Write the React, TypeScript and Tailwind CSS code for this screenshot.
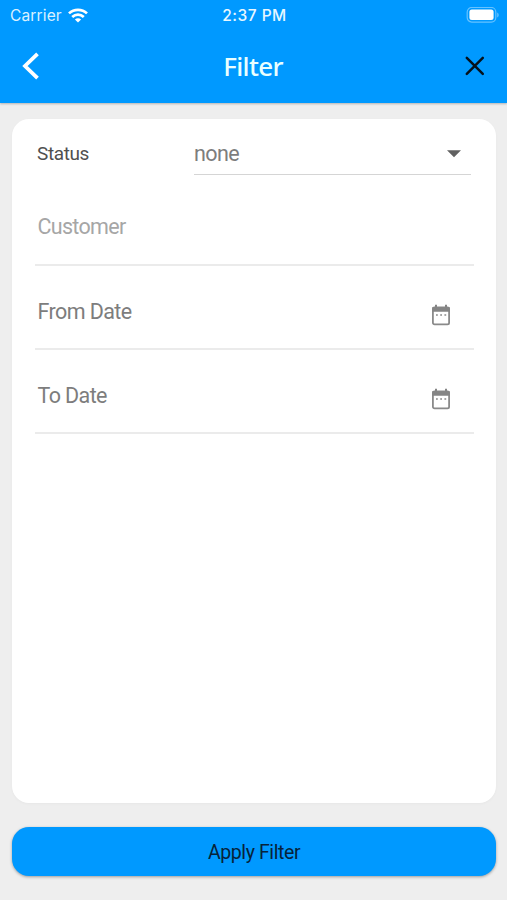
import { useState } from "react";

function StatusBar() {
  return (
    <div className="grid h-[30px] grid-cols-3 items-center pl-[10px] pr-2 font-['Inter','Liberation_Sans',sans-serif] text-white">
      <div className="flex items-center gap-[6px]">
        <span className="pt-px text-[15.5px] leading-5 tracking-[0.15px] text-[#d9f1ff]">Carrier</span>
        <svg width="20" height="15" viewBox="0 0 20 15" fill="none" stroke="currentColor" strokeWidth="2.7">
          <path d="M1 5.4C6 .6 14 .6 19 5.4" />
          <path d="M4.2 9C7.6 5.8 12.4 5.8 15.8 9" />
          <path d="M10 14.6 6.9 11.6c1.8-1.7 4.4-1.7 6.2 0z" fill="currentColor" stroke="none" />
        </svg>
      </div>
      <span className="pt-px text-center text-[15.5px] font-medium leading-5 tracking-[0.5px] text-[#e8f7ff]">2:37 PM</span>
      <svg className="justify-self-end" width="33" height="16" viewBox="0 0 33 16">
        <rect x="1.2" y=".5" width="28.6" height="14.6" rx="4.5" fill="none" stroke="#66c2ff" strokeWidth="1.2" />
        <rect x="3.4" y="2.6" width="24.2" height="10.4" rx="2.5" fill="#fff" />
        <path d="M31.2 5.5c2 .8 2 4.2 0 5z" fill="#66c2ff" />
      </svg>
    </div>
  );
}

function CalendarIcon() {
  return (
    <svg width="20" height="22" viewBox="0 0 20 22" fill="none">
      <rect x="1.9" y="3.4" width="16.2" height="17" rx="1.6" stroke="#8a8a8a" strokeWidth="1.8" />
      <path d="M1.2 3.2h17.6v4.6H1.2zM4 .8h2v3H4zM14 .8h2v3h-2z" fill="#858585" />
      <path d="M5 10.2h1.8v1.6H5zM9.2 10.2H11v1.6H9.2zM13.4 10.2h1.8v1.6h-1.8z" fill="#8a8a8a" />
    </svg>
  );
}

function DateField({ label }: { label: string }) {
  return (
    <button className="flex h-[84px] w-full items-center justify-between border-b-2 border-[#ebebeb] pl-[2.5px] pr-[23px] pt-[10px] text-left">
      <span className="text-[21.5px] leading-7 tracking-[-0.6px] text-[#7d7d7d]">{label}</span>
      <span className="pt-[6px]">
        <CalendarIcon />
      </span>
    </button>
  );
}

export default function App() {
  const [customer, setCustomer] = useState("");

  return (
    <div className="flex h-[900px] w-full flex-col bg-[#eeeeee] font-['Roboto','Noto_Sans',sans-serif]">
      <header className="h-[103px] shrink-0 bg-[#0099ff] shadow-[0_1px_2px_rgba(0,0,0,0.25)]">
        <StatusBar />
        <div className="flex h-[72px] items-center justify-between pl-[22px] pr-[22px]">
          <button aria-label="Back">
            <svg width="18" height="28" viewBox="0 0 18 28" fill="none" stroke="#fff" strokeWidth="3.8">
              <path d="M15.5 1.8 3 14l12.5 12.2" />
            </svg>
          </button>
          <h1 className="pl-px font-['Noto_Sans',sans-serif] text-[26px] font-medium leading-9 tracking-[-0.7px] text-[#eaffff]">Filter</h1>
          <button aria-label="Close">
            <svg width="20" height="20" viewBox="0 0 20 20" fill="none" stroke="#06121c" strokeWidth="2.5" strokeLinecap="round">
              <path d="M1.8 1.8l16 16M17.8 1.8l-16 16" />
            </svg>
          </button>
        </div>
      </header>

      <main className="mx-3 mr-[11px] mt-4 h-[684px] shrink-0 rounded-[17px] bg-white pl-[23px] pr-[22px] shadow-[0_1px_3px_rgba(0,0,0,0.03)]">
        <div className="flex h-[56px] pl-[2px] pr-[3px]">
          <span className="w-[157px] pt-[21px] text-[19px] leading-7 tracking-[-0.4px] text-[#4f4f4f]">Status</span>
          <button className="flex flex-1 items-start justify-between border-b border-[#d5d5d5] pr-[10px] text-left">
            <span className="pt-[21px] text-[21.5px] leading-7 tracking-[-0.6px] text-[#7d7d7d]">none</span>
            <svg className="mt-[31px]" width="14" height="8" viewBox="0 0 14 8">
              <path d="M0 .3h14L7 7.3z" fill="#616161" />
            </svg>
          </button>
        </div>
        <input
          value={customer}
          onChange={(e) => setCustomer(e.target.value)}
          placeholder="Customer"
          className="block h-[91px] w-full border-b-2 border-[#ebebeb] pb-0 pl-[2.5px] pt-[13px] text-[21.5px] tracking-[-0.7px] text-[#7d7d7d] outline-none placeholder:text-[#a6a6a6]"
        />
        <DateField label="From Date" />
        <DateField label="To Date" />
      </main>

      <button className="mx-3 mr-[11px] mt-6 h-[49px] shrink-0 rounded-[17px] bg-[#0099ff] pt-[2px] text-[19.5px] tracking-[-0.4px] text-[#07233a] shadow-[0_1px_3px_rgba(0,0,0,0.35)]">
        Apply Filter
      </button>
    </div>
  );
}
